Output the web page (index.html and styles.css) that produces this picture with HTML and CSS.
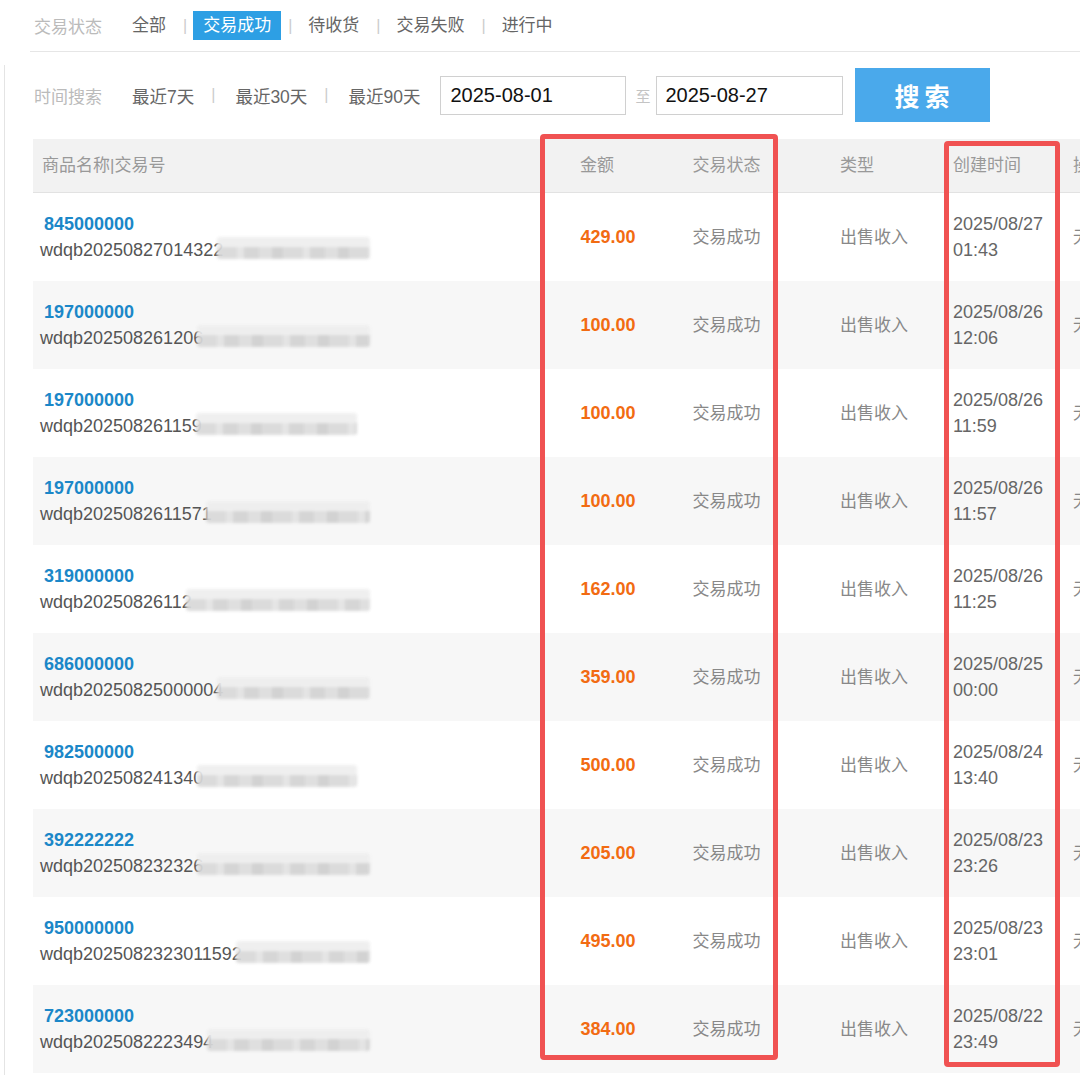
FILE: index.html
```html
<!DOCTYPE html>
<html lang="zh-CN">
<head>
<meta charset="utf-8">
<title>交易记录</title>
<link rel="stylesheet" href="styles.css">
</head>
<body>
<div class="tabs">
  <span class="label">交易状态</span>
  <span class="tab">全部</span><span class="sep">|</span>
  <span class="tab active">交易成功</span><span class="sep">|</span>
  <span class="tab">待收货</span><span class="sep">|</span>
  <span class="tab">交易失败</span><span class="sep">|</span>
  <span class="tab">进行中</span>
</div>
<div class="panel">
  <div class="search">
    <span class="search-label">时间搜索</span>
    <span class="quick">最近7天</span><span class="qsep">|</span>
    <span class="quick">最近30天</span><span class="qsep">|</span>
    <span class="quick">最近90天</span>
    <div class="date-input">2025-08-01</div>
    <span class="to">至</span>
    <div class="date-input first">2025-08-27</div>
    <div class="btn">搜索</div>
  </div>
  <div class="table">
    <div class="thead">
      <div class="c-name">商品名称|交易号</div>
      <div class="c-amt">金额</div>
      <div class="c-status">交易状态</div>
      <div class="c-type">类型</div>
      <div class="c-date">创建时间</div>
      <div class="c-op">操作</div>
    </div>
    <div class="row">
      <div class="c-name"><div class="pid">845000000</div><div class="trade"><span>wdqb20250827014322</span><i class="blob"></i></div></div>
      <div class="c-amt amt">429.00</div><div class="c-status">交易成功</div><div class="c-type">出售收入</div>
      <div class="c-date">2025/08/27<br>01:43</div><div class="c-op">无</div>
    </div>
    <div class="row">
      <div class="c-name"><div class="pid">197000000</div><div class="trade"><span>wdqb202508261206</span><i class="blob"></i></div></div>
      <div class="c-amt amt">100.00</div><div class="c-status">交易成功</div><div class="c-type">出售收入</div>
      <div class="c-date">2025/08/26<br>12:06</div><div class="c-op">无</div>
    </div>
    <div class="row">
      <div class="c-name"><div class="pid">197000000</div><div class="trade short"><span>wdqb202508261159</span><i class="blob"></i></div></div>
      <div class="c-amt amt">100.00</div><div class="c-status">交易成功</div><div class="c-type">出售收入</div>
      <div class="c-date">2025/08/26<br>11:59</div><div class="c-op">无</div>
    </div>
    <div class="row">
      <div class="c-name"><div class="pid">197000000</div><div class="trade"><span>wdqb2025082611571</span><i class="blob"></i></div></div>
      <div class="c-amt amt">100.00</div><div class="c-status">交易成功</div><div class="c-type">出售收入</div>
      <div class="c-date">2025/08/26<br>11:57</div><div class="c-op">无</div>
    </div>
    <div class="row">
      <div class="c-name"><div class="pid">319000000</div><div class="trade"><span>wdqb20250826112</span><i class="blob"></i></div></div>
      <div class="c-amt amt">162.00</div><div class="c-status">交易成功</div><div class="c-type">出售收入</div>
      <div class="c-date">2025/08/26<br>11:25</div><div class="c-op">无</div>
    </div>
    <div class="row">
      <div class="c-name"><div class="pid">686000000</div><div class="trade"><span>wdqb20250825000004</span><i class="blob"></i></div></div>
      <div class="c-amt amt">359.00</div><div class="c-status">交易成功</div><div class="c-type">出售收入</div>
      <div class="c-date">2025/08/25<br>00:00</div><div class="c-op">无</div>
    </div>
    <div class="row">
      <div class="c-name"><div class="pid">982500000</div><div class="trade short"><span>wdqb202508241340</span><i class="blob"></i></div></div>
      <div class="c-amt amt">500.00</div><div class="c-status">交易成功</div><div class="c-type">出售收入</div>
      <div class="c-date">2025/08/24<br>13:40</div><div class="c-op">无</div>
    </div>
    <div class="row">
      <div class="c-name"><div class="pid">392222222</div><div class="trade"><span>wdqb202508232326</span><i class="blob"></i></div></div>
      <div class="c-amt amt">205.00</div><div class="c-status">交易成功</div><div class="c-type">出售收入</div>
      <div class="c-date">2025/08/23<br>23:26</div><div class="c-op">无</div>
    </div>
    <div class="row">
      <div class="c-name"><div class="pid">950000000</div><div class="trade"><span>wdqb2025082323011592</span><i class="blob"></i></div></div>
      <div class="c-amt amt">495.00</div><div class="c-status">交易成功</div><div class="c-type">出售收入</div>
      <div class="c-date">2025/08/23<br>23:01</div><div class="c-op">无</div>
    </div>
    <div class="row">
      <div class="c-name"><div class="pid">723000000</div><div class="trade"><span>wdqb2025082223494</span><i class="blob"></i></div></div>
      <div class="c-amt amt">384.00</div><div class="c-status">交易成功</div><div class="c-type">出售收入</div>
      <div class="c-date">2025/08/22<br>23:49</div><div class="c-op">无</div>
    </div>
  </div>
</div>
<div class="mark mark-a"></div>
<div class="mark mark-b"></div>
</body>
</html>
```
FILE: styles.css
```css
html, body {
  margin: 0;
  padding: 0;
  background: #fff;
  overflow: hidden;
}
body {
  width: 1080px;
  height: 1082px;
  position: relative;
  font-family: "Liberation Sans", "Noto Sans CJK SC", sans-serif;
  color: #666;
}

/* top status tabs */
.tabs {
  margin-left: 30px;
  height: 51px;
  border-bottom: 1px solid #e6e6e6;
  display: flex;
  align-items: center;
  padding-left: 4px;
  font-size: 17px;
  color: #666;
  white-space: nowrap;
}
.label {
  color: #bbb;
  margin-right: 20px;
}
.tab {
  padding: 0 10px;
  line-height: 29px;
}
.tab.active {
  background: #2d9fe4;
  color: #fff;
}
.sep {
  color: #ccc;
  font-size: 16px;
  margin: 0 6px 0 7px;
}

/* panel */
.panel {
  margin-left: 4px;
  margin-top: 13px;
  border-left: 1px solid #e4e4e4;
  padding-left: 28px;
  width: 1200px;
  height: 1010px;
}
.search {
  height: 60px;
  display: flex;
  align-items: center;
  padding-left: 1px;
  font-size: 17.5px;
  white-space: nowrap;
}
.search-label {
  color: #bbb;
  font-size: 17px;
  margin-right: 30px;
}
.quick {
  color: #666;
}
.qsep {
  color: #ccc;
  font-size: 16px;
  margin: 0 20px 0 17px;
}
.date-input {
  width: 186px;
  height: 39px;
  box-sizing: border-box;
  border: 1px solid #d0d0d0;
  font-size: 20px;
  color: #111;
  padding-left: 9px;
  display: flex;
  align-items: center;
  margin-left: 20px;
}
.date-input.first {
  margin-left: 0;
  width: 187px;
}
.to {
  color: #c4c4c4;
  font-size: 15px;
  margin: 0 5px 0 9px;
}
.btn {
  margin-left: 12px;
  width: 135px;
  height: 54px;
  background: #4aa9eb;
  color: #fff;
  font-size: 25px;
  font-weight: bold;
  letter-spacing: 5px;
  text-indent: 5px;
  display: flex;
  align-items: center;
  justify-content: center;
}

/* table */
.table {
  margin-top: 14px;
  width: 1120px;
}
.thead, .row {
  display: grid;
  grid-template-columns: 515px 120px 117px 160px 118px 90px;
  align-items: center;
  white-space: nowrap;
}
.thead {
  height: 53px;
  background: #f2f2f2;
  border-bottom: 1px solid #e2e2e2;
  color: #999;
  font-size: 17px;
}
.thead > div {
  padding-bottom: 4px;
}
.row {
  height: 88px;
  background: #fff;
  color: #888;
  font-size: 17px;
}
.row:nth-child(odd) {
  background: #f7f7f7;
}
.row .c-status, .row .c-type, .row .c-op {
  padding-bottom: 4px;
}
.thead .c-name { padding-left: 9px; }
.row .c-name { padding-left: 7px; }
.thead .c-amt { padding-left: 32px; }
.row .c-amt { text-align: center; }
.c-status { text-align: center; }
.c-type { padding-left: 55px; }
.c-date { padding-left: 8px; }
.row .c-date {
  font-size: 18px;
  line-height: 26px;
  color: #666;
}
.c-op { padding-left: 10px; }

.pid {
  margin-left: 4px;
  font-size: 18px;
  line-height: 26px;
  font-weight: bold;
  color: #1b87c8;
}
.trade {
  width: 330px;
  height: 26px;
  display: flex;
  align-items: center;
  font-size: 18px;
  line-height: 26px;
  color: #555;
}
.trade.short { width: 317px; }
.blob {
  flex: 1;
  height: 22px;
  margin-left: -6px;
  margin-bottom: 4px;
  background:
    linear-gradient(#eeeeee, #eeeeee) top / 100% 45% no-repeat,
    repeating-linear-gradient(90deg,
      #d9d9d9 0 20px,
      #e3e3e3 20px 27px,
      #d3d3d3 27px 42px,
      #dddddd 42px 55px,
      #cfcfcf 55px 66px) bottom / 100% 55% no-repeat;
  filter: blur(1.8px);
  opacity: 0.92;
  border-radius: 3px;
}
.amt {
  font-size: 18px;
  font-weight: bold;
  color: #f26b12;
}

/* red annotation frames drawn over the table */
.mark {
  position: absolute;
  box-sizing: border-box;
  border: 5px solid #f05252;
  border-radius: 4px;
  pointer-events: none;
}
.mark-a {
  left: 540px;
  top: 134px;
  width: 238px;
  height: 926px;
}
.mark-b {
  left: 944px;
  top: 141px;
  width: 116px;
  height: 926px;
}
```
